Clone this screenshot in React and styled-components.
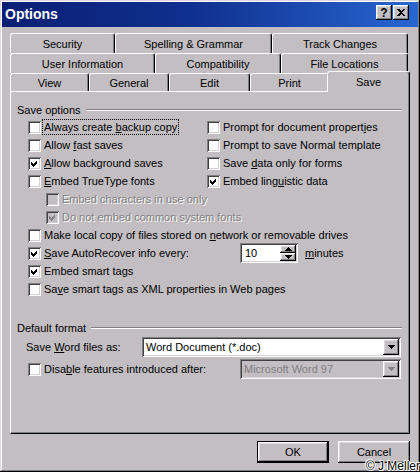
import styled, { createGlobalStyle, css } from "styled-components"

const FACE = "#c2bec2"

const raised = css`
  box-shadow: inset -1px -1px #000, inset 1px 1px #fff, inset -2px -2px #808080, inset 2px 2px #dcd8dc;
`
const sunken = css`
  box-shadow: inset 1px 1px #808080, inset -1px -1px #fff, inset 2px 2px #404040, inset -2px -2px #d4d0d4;
`

const GlobalStyle = createGlobalStyle`
  html, body {
    margin: 0;
    padding: 0;
    background: ${FACE};
  }
  body {
    font-family: "Liberation Sans", Arial, sans-serif;
    font-size: 11px;
    color: #000;
  }
`

const Dialog = styled.div`
  position: relative;
  width: 420px;
  height: 472px;
  box-sizing: border-box;
  padding: 2px;
  background: ${FACE};
  box-shadow: inset -1px -1px #000, inset 1px 1px #dcd8dc, inset -2px -2px #808080, inset 2px 2px #fff;
  display: flex;
  flex-direction: column;
`

const TitleBar = styled.div`
  display: flex;
  align-items: flex-start;
  height: 25px;
  padding: 0 9px 0 3px;
  background: linear-gradient(to right, #0a1f74 0%, #0f2f8e 45%, #2866d0 100%);
  color: #fff;
  .caption {
    flex: 1;
    font-size: 14px;
    font-weight: bold;
    line-height: 25px;
  }
`

const CaptionButton = styled.div`
  width: 16px;
  height: 15px;
  margin-top: 3px;
  margin-left: ${p => (p.$gap ? 1 : 0)}px;
  box-sizing: border-box;
  background: ${FACE};
  ${raised};
  display: flex;
  align-items: center;
  justify-content: center;
  color: #000;
  font-size: 12px;
  font-weight: bold;
`

const Body = styled.div`
  display: flex;
  flex-direction: column;
  padding: 6px 8px 0;
`

const TabRow = styled.div`
  display: flex;
  width: 398px;
  height: ${p => p.$h}px;
`

const Tab = styled.div`
  position: relative;
  z-index: ${p => (p.$selected ? 2 : 1)};
  box-sizing: border-box;
  flex: none;
  width: ${p => p.$w + (p.$selected ? 4 : 0)}px;
  height: ${p => p.$h + (p.$selected ? 3 : 0)}px;
  margin: ${p => (p.$selected ? "-2px -2px 0 -2px" : "0")};
  padding-top: ${p => (p.$selected ? 0 : 1)}px;
  display: flex;
  align-items: center;
  justify-content: center;
  background: ${FACE};
  border-top: 1px solid #fff;
  border-left: 1px solid #fff;
  border-right: 1px solid #000;
  border-radius: 3px 3px 0 0;
  box-shadow: inset -1px 0 #808080;
  white-space: nowrap;
`

const Panel = styled.div`
  box-sizing: border-box;
  width: 400px;
  height: 343px;
  padding: 9px 7px 0 6px;
  border-top: 1px solid #fff;
  border-left: 1px solid #fff;
  border-right: 1px solid #000;
  border-bottom: 1px solid #000;
  box-shadow: inset -1px -1px #808080;
`

const GroupHeader = styled.div`
  display: flex;
  align-items: center;
  gap: 5px;
  height: 17px;
  margin-top: ${p => p.$mt || 0}px;
  &::after {
    content: "";
    flex: 1;
    border-top: 1px solid #808080;
    border-bottom: 1px solid #fff;
  }
`

const OptionGrid = styled.div`
  display: grid;
  grid-template-columns: 179px 1fr;
  grid-auto-rows: 18px;
  margin-left: 11px;
`

const CheckRow = styled.div`
  display: flex;
  align-items: center;
  gap: 3px;
  height: 18px;
  padding-left: ${p => p.$indent || 0}px;
  grid-column: ${p => (p.$span ? "1 / -1" : "auto")};
  white-space: nowrap;
`

const Box = styled.div`
  flex: none;
  width: 13px;
  height: 13px;
  box-sizing: border-box;
  background: ${p => (p.$disabled ? FACE : "#fff")};
  ${sunken};
  svg {
    display: block;
  }
`

const Label = styled.span`
  flex: none;
  width: ${p => (p.$w ? `${p.$w}px` : "auto")};
  color: ${p => (p.$disabled ? "#808080" : "#000")};
  text-shadow: ${p => (p.$disabled ? "1px 1px 0 #fff" : "none")};
  ${p =>
    p.$focus &&
    css`
      outline: 1px dotted #000;
      outline-offset: 1px;
    `}
`

const SpinBox = styled.div`
  display: flex;
  flex: none;
  width: 58px;
  height: 20px;
  box-sizing: border-box;
  padding: 2px;
  background: #fff;
  ${sunken};
`

const SpinValue = styled.div`
  flex: 1;
  padding-left: 3px;
  line-height: 16px;
`

const SpinButtons = styled.div`
  display: flex;
  flex-direction: column;
  width: 16px;
`

const SpinButton = styled.div`
  flex: 1;
  display: flex;
  align-items: center;
  justify-content: center;
  background: ${FACE};
  ${raised};
`

const Units = styled.span`
  margin-left: 4px;
`

const FormatRow = styled.div`
  display: flex;
  align-items: center;
  gap: ${p => p.$gap || 0}px;
  height: 22px;
  margin-left: ${p => p.$ml}px;
  white-space: nowrap;
`

const Combo = styled.div`
  display: flex;
  flex: none;
  width: ${p => p.$w}px;
  height: 20px;
  box-sizing: border-box;
  padding: 2px;
  background: ${p => (p.$disabled ? FACE : "#fff")};
  color: ${p => (p.$disabled ? "#808080" : "#000")};
  ${sunken};
`

const ComboText = styled.div`
  flex: 1;
  padding-left: 2px;
  line-height: 16px;
`

const ComboButton = styled.div`
  width: 16px;
  display: flex;
  align-items: center;
  justify-content: center;
  background: ${FACE};
  ${raised};
`

const ButtonRow = styled.div`
  display: flex;
  justify-content: flex-end;
  gap: 9px;
  width: 400px;
  margin-top: 7px;
`

const Button = styled.button`
  box-sizing: border-box;
  width: 72px;
  height: 22px;
  padding: 0;
  font: inherit;
  font-size: 11px;
  color: #000;
  background: ${FACE};
  border: ${p => (p.$default ? "1px solid #000" : "none")};
  ${raised};
`

const Watermark = styled.span`
  position: absolute;
  right: 0;
  bottom: -1px;
  font-size: 12px;
  color: #000;
  text-shadow: 1px 0 #fff, -1px 0 #fff, 0 1px #fff, 0 -1px #fff, 1px 1px #fff, -1px -1px #fff;
`

function CheckBox({ checked, disabled }) {
  return (
    <Box $disabled={disabled}>
      {checked && (
        <svg width="13" height="13" viewBox="0 0 13 13">
          <path d="M3 5 L5 7 L9 3 L9 6 L5 10 L3 8 Z" fill={disabled ? "#808080" : "#000"} shapeRendering="crispEdges" />
        </svg>
      )}
    </Box>
  )
}

function Option({ children, checked, disabled, indent, span, focus }) {
  return (
    <CheckRow $indent={indent} $span={span}>
      <CheckBox checked={checked} disabled={disabled} />
      <Label $disabled={disabled} $focus={focus}>{children}</Label>
    </CheckRow>
  )
}

function Arrow({ up, color = "#000" }) {
  return (
    <svg width="7" height="4" viewBox="0 0 7 4" shapeRendering="crispEdges">
      <path d={up ? "M3.5 0 L7 4 L0 4 Z" : "M0 0 L7 0 L3.5 4 Z"} fill={color} />
    </svg>
  )
}

const rows = [
  { h: 20, tabs: [["Security", 105], ["Spelling & Grammar", 157], ["Track Changes", 136]] },
  { h: 20, tabs: [["User Information", 145], ["Compatibility", 126], ["File Locations", 127]] },
  { h: 18, tabs: [["View", 79], ["General", 80], ["Edit", 81], ["Print", 79], ["Save", 79]] },
]

export default function App() {
  return (
    <>
      <GlobalStyle />
      <Dialog>
        <TitleBar>
          <span className="caption">Options</span>
          <CaptionButton>?</CaptionButton>
          <CaptionButton $gap>
            <svg width="8" height="7" viewBox="0 0 8 7" shapeRendering="crispEdges">
              <path d="M0 0 L2 0 L4 2 L6 0 L8 0 L5 3.5 L8 7 L6 7 L4 5 L2 7 L0 7 L3 3.5 Z" fill="#000" />
            </svg>
          </CaptionButton>
        </TitleBar>

        <Body>
          {rows.map((row, i) => (
            <TabRow key={i} $h={row.h}>
              {row.tabs.map(([name, w]) => (
                <Tab key={name} $w={w} $h={row.h} $selected={name === "Save"}>
                  {name}
                </Tab>
              ))}
            </TabRow>
          ))}

          <Panel>
            <GroupHeader>Save options</GroupHeader>
            <OptionGrid>
              <Option focus>Always create <u>b</u>ackup copy</Option>
              <Option>Prompt for document propert<u>i</u>es</Option>
              <Option>Allow <u>f</u>ast saves</Option>
              <Option>Prompt to save Normal template</Option>
              <Option checked><u>A</u>llow background saves</Option>
              <Option>Save <u>d</u>ata only for forms</Option>
              <Option><u>E</u>mbed TrueType fonts</Option>
              <Option checked>Embed ling<u>u</u>istic data</Option>
              <Option span indent={18} disabled>Embed characters in use only</Option>
              <Option span indent={18} disabled checked>Do not embed common system fonts</Option>
              <Option span>Make local copy of files stored on <u>n</u>etwork or removable drives</Option>
              <CheckRow $span>
                <CheckBox checked />
                <Label $w={193}><u>S</u>ave AutoRecover info every:</Label>
                <SpinBox>
                  <SpinValue>10</SpinValue>
                  <SpinButtons>
                    <SpinButton><Arrow up /></SpinButton>
                    <SpinButton><Arrow /></SpinButton>
                  </SpinButtons>
                </SpinBox>
                <Units><u>m</u>inutes</Units>
              </CheckRow>
              <Option span checked>Embed smart tags</Option>
              <Option span>Sa<u>v</u>e smart tags as XML properties in Web pages</Option>
            </OptionGrid>

            <GroupHeader $mt={21}>Default format</GroupHeader>
            <FormatRow $ml={9}>
              <Label $w={116}>Save <u>W</u>ord files as:</Label>
              <Combo $w={259}>
                <ComboText>Word Document (*.doc)</ComboText>
                <ComboButton><Arrow /></ComboButton>
              </Combo>
            </FormatRow>
            <FormatRow $ml={11} $gap={3}>
              <CheckBox />
              <Label $w={193}>Disa<u>b</u>le features introduced after:</Label>
              <Combo $w={161} $disabled>
                <ComboText>Microsoft Word 97</ComboText>
                <ComboButton><Arrow color="#808080" /></ComboButton>
              </Combo>
            </FormatRow>
          </Panel>

          <ButtonRow>
            <Button $default>OK</Button>
            <Button>Cancel</Button>
          </ButtonRow>
        </Body>
        <Watermark>© J Meller</Watermark>
      </Dialog>
    </>
  )
}
